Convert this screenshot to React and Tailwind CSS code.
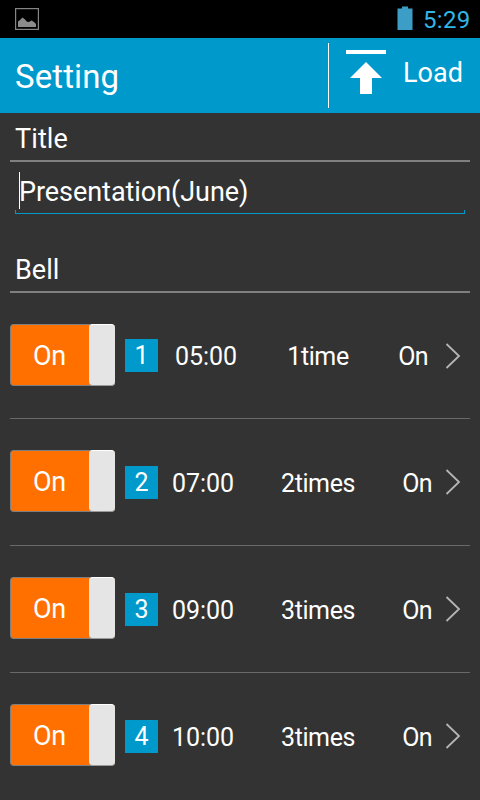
import { useState } from "react";

const initialBells = [
  { id: 1, time: "05:00", repeat: "1time", on: true },
  { id: 2, time: "07:00", repeat: "2times", on: true },
  { id: 3, time: "09:00", repeat: "3times", on: true },
  { id: 4, time: "10:00", repeat: "3times", on: true },
];

function StatusBar() {
  return (
    <div className="h-[38px] bg-black flex items-center justify-between pl-[15px] pr-[10px]">
      <svg width="24" height="22" viewBox="0 0 24 22">
        <rect x="0.6" y="0.6" width="22.8" height="20.8" fill="none" stroke="#858585" strokeWidth="1.2" />
        <path d="M3 19V13.500L5 12L7.500 9.500L10 11.500L12 13.800L14 14L16.500 12.500L19 14L21 16V19Z" fill="#8c8c8c" />
      </svg>
      <div className="flex items-center">
        <svg width="16" height="24" viewBox="0 0 16 24" className="-mt-[2px]">
          <path d="M5 0.500H11V2.500H15.500V24H0.500V2.500H5Z" fill="#3c9dc6" />
        </svg>
        <span className="ml-[10px] w-[47px] text-2xl leading-[38px] tracking-[0.3px] pt-px text-[#33b5e5] whitespace-nowrap">
          5:29
        </span>
      </div>
    </div>
  );
}

function Header() {
  return (
    <div className="h-[75px] bg-[#0099cc] flex items-center">
      <h1 className="pl-[15px] flex-1 text-[33px] leading-[75px] tracking-[0.1px] pt-[2px]">Setting</h1>
      <div className="w-px h-[65px] bg-white" />
      <button className="flex items-start h-[65px] w-[151px] pl-[17px]">
        <svg width="40" height="44" viewBox="0 0 40 44" className="mt-[7px]" fill="#fff">
          <rect width="40" height="4" />
          <path d="M20 12L36 28H26V44H14V28H4Z" />
        </svg>
        <span className="ml-[17px] text-[27px] leading-[60px]">Load</span>
      </button>
    </div>
  );
}

function Bell({ bell, first, last, onToggle }) {
  return (
    <div
      className={
        first
          ? "mx-[10px] h-[126px] flex items-start border-b border-[#696969]"
          : last
            ? "mx-[10px] h-[127px] flex items-start"
            : "mx-[10px] h-[127px] flex items-start border-b border-[#696969]"
      }
    >
      <button
        onClick={onToggle}
        className="mt-[31px] w-[105px] h-[62px] flex rounded-[4px] bg-[#ff7000] border border-[#808080] border-r-0"
      >
        <span className="w-[78px] pr-px text-center text-[27px] leading-[63px] tracking-[-0.3px]">
          {bell.on ? "On" : "Off"}
        </span>
        <span className="-mt-px w-[26px] h-[62px] rounded-[4px] bg-[#e5e5e5] border-b border-[#999999] border-t border-t-white" />
      </button>
      <div className={first ? "mt-[46px] flex" : "mt-[47px] flex"}>
        <span className="ml-[10px] w-[33px] h-[33px] bg-[#0099cc] text-center text-[25px] leading-[33px]">
          {bell.id}
        </span>
        <div className={first ? "ml-[3px] flex text-center text-[25px] leading-[36px]" : "flex text-center text-[25px] leading-[36px]"}>
          <span className="w-[90px] tracking-[-0.1px]">{bell.time}</span>
          <span className={first ? "ml-[7px] w-[120px] tracking-[-0.4px]" : "ml-[10px] w-[120px] tracking-[-0.4px]"}>
            {bell.repeat}
          </span>
          <span className={first ? "ml-[15px] w-[40px] tracking-[-0.8px]" : "ml-[19px] w-[40px] tracking-[-0.8px]"}>
            {bell.on ? "On" : "Off"}
          </span>
        </div>
      </div>
      <svg
        width="16"
        height="28"
        viewBox="0 0 16 28"
        className={first ? "mt-[49px] ml-[12px]" : "mt-[49px] ml-[8px]"}
        fill="none"
        stroke="#b5b5b5"
        strokeWidth="1.8"
      >
        <path d="M1.500 2L14 14L1.500 26" />
      </svg>
    </div>
  );
}

export default function App() {
  const [bells, setBells] = useState(initialBells);

  const toggleBell = (id) => {
    setBells(bells.map((b) => (b.id === id ? { ...b, on: !b.on } : b)));
  };

  return (
    <div className="w-[480px] h-[800px] overflow-hidden bg-[#333333] text-white font-[Roboto,sans-serif]">
      <StatusBar />
      <Header />

      {/* Title */}
      <h2 className="mx-[10px] h-[49px] pl-[5px] border-b-2 border-[#808080] text-[27px] leading-[53px] tracking-[0.1px]">
        Title
      </h2>
      <div className="mx-[15px] h-[52px] flex flex-col justify-end">
        <div className="flex items-center h-[38px]">
          <div className="ml-[4px] w-px h-[37px] -mt-px bg-white" />
          <span className="-ml-px text-[27px] leading-[38px] pt-[2px] tracking-[-0.05px]">Presentation(June)</span>
        </div>
        <div className="h-[4px] border-x border-b border-[#0099cc]" />
      </div>

      {/* Bell */}
      <h2 className="mt-[28px] mx-[10px] h-[51px] pl-[5px] border-b-2 border-[#808080] text-[27px] leading-[56px]">Bell</h2>
      {bells.map((bell, i) => (
        <Bell
          key={bell.id}
          bell={bell}
          first={i === 0}
          last={i === bells.length - 1}
          onToggle={() => toggleBell(bell.id)}
        />
      ))}
    </div>
  );
}
